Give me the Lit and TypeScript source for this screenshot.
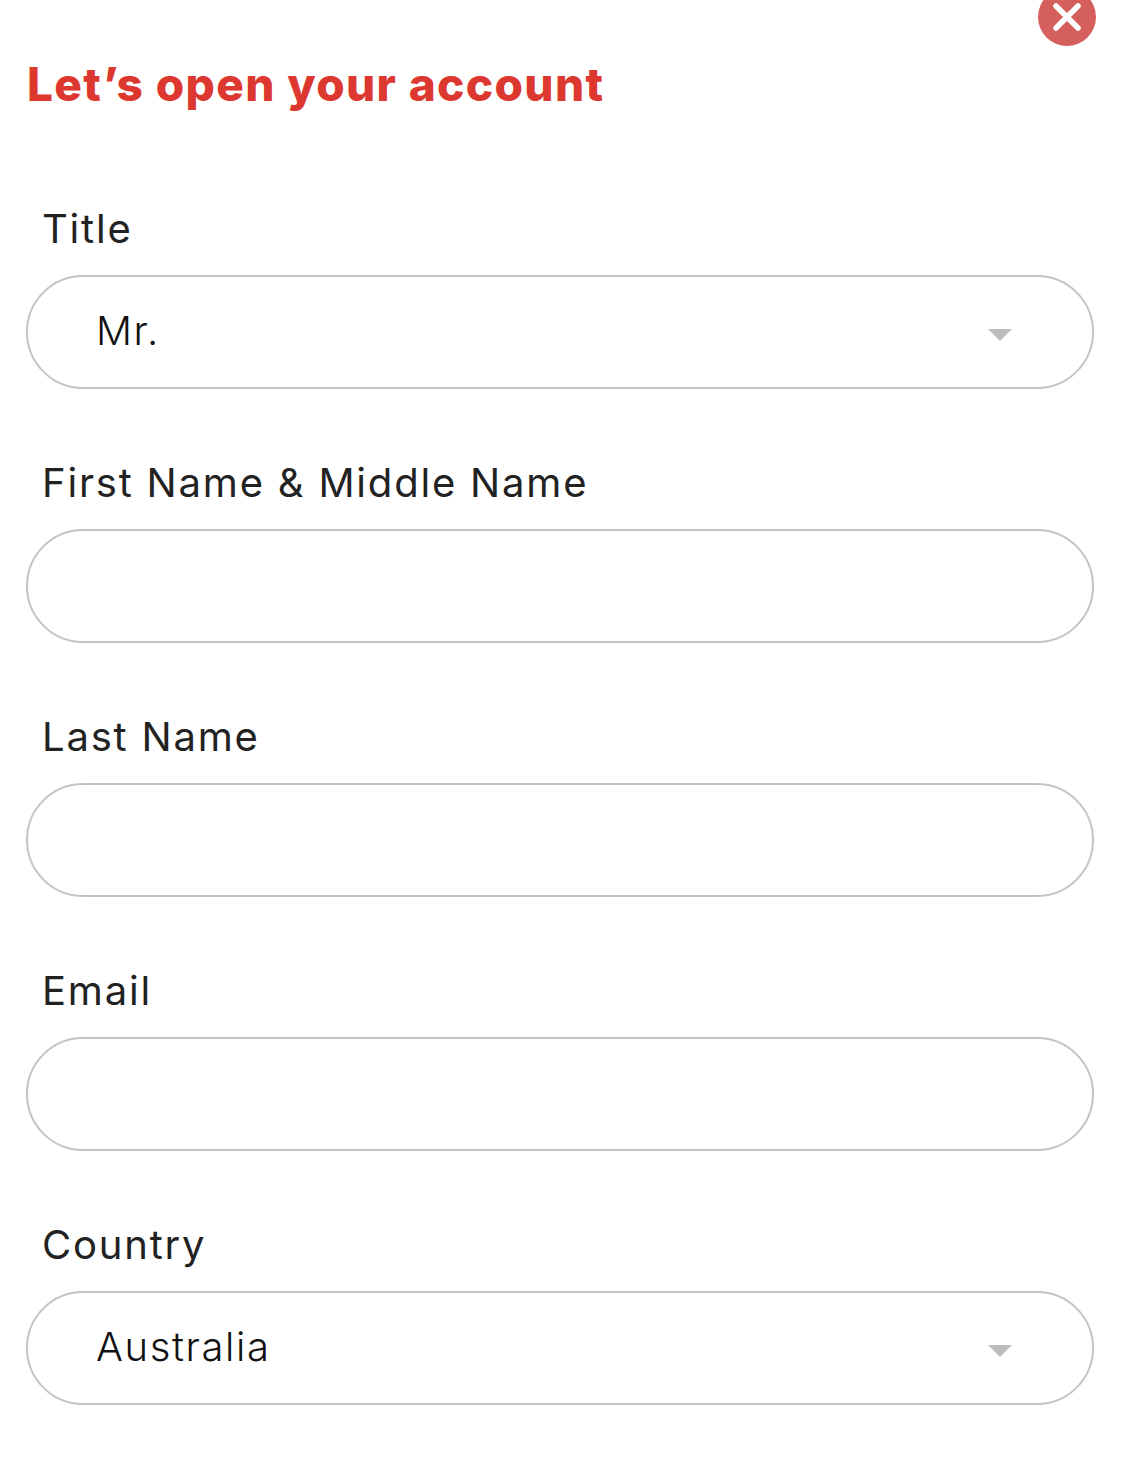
import { LitElement, html, css } from "lit";
import { customElement } from "lit/decorators.js";

interface Field { label: string; value?: string; select?: boolean; }

const FIELDS: Field[] = [
  { label: "Title", value: "Mr.", select: true },
  { label: "First Name & Middle Name" },
  { label: "Last Name" },
  { label: "Email" },
  { label: "Country", value: "Australia", select: true },
];

@customElement("app-root")
export class AppRoot extends LitElement {
  static styles = css`
    :host { display: block; position: relative; width: 1142px; height: 1460px; background: #fff; overflow: hidden; font-family: "Inter", "Liberation Sans", sans-serif; }
    .close { position: absolute; left: 1038px; top: -12px; width: 58px; height: 58px; border-radius: 50%; background: #d55f5c; display: flex; align-items: center; justify-content: center; }
    .page { display: flex; flex-direction: column; padding: 0 48px 0 26px; }
    h1 { margin: 0; padding: 57px 0 0 1px; height: 190px; box-sizing: border-box; font-size: 46px; line-height: 54px; font-weight: 800; color: #dc3830; letter-spacing: 1.35px; white-space: nowrap; }
    .fields { display: flex; flex-direction: column; gap: 55px; }
    .field { display: flex; flex-direction: column; }
    label { display: block; padding: 14px 0 21px 16px; font-size: 40px; line-height: 50px; font-weight: 400; color: #222; letter-spacing: 1.8px; }
    .box { height: 114px; box-sizing: border-box; border: 2px solid #c4c4c4; border-radius: 57px; display: flex; align-items: center; justify-content: space-between; padding: 0 80px 0 68px; background: #fff; }
    .value { font-size: 40px; font-weight: 300; line-height: 50px; color: #111; letter-spacing: 1.6px; margin-top: -2px; }
    .arrow { display: block; margin-top: 6px; }
  `;

  render() {
    return html`
      <div class="close">
        <svg width="30" height="30" viewBox="0 0 30 30"><path d="M4 4 L26 26 M26 4 L4 26" stroke="#fff" stroke-width="5.5" stroke-linecap="round" fill="none"/></svg>
      </div>
      <div class="page">
        <h1>Let’s open your account</h1>
        <div class="fields">
          ${FIELDS.map((f) => html`
            <div class="field">
              <label>${f.label}</label>
              <div class="box">
                <span class="value">${f.value ?? ""}</span>
                ${f.select ? html`<svg class="arrow" width="24" height="12" viewBox="0 0 24 12"><path d="M0 0 H24 L12 12 Z" fill="#bdbdbd"/></svg>` : ""}
              </div>
            </div>`)}
        </div>
      </div>
    `;
  }
}
